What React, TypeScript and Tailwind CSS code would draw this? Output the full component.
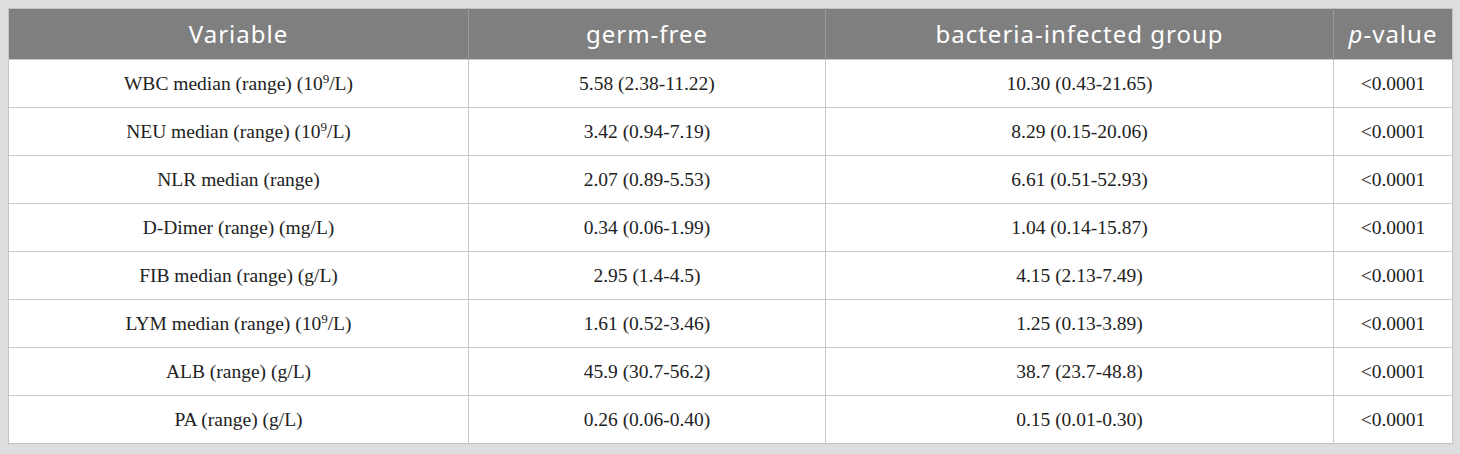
import React from 'react';

const sup = <sup className="relative -top-[7px] text-[13px]">9</sup>;

const rows: [React.ReactNode, string, string, string][] = [
  [<>WBC median (range) (10{sup}/L)</>, '5.58 (2.38-11.22)', '10.30 (0.43-21.65)', '<0.0001'],
  [<>NEU median (range) (10{sup}/L)</>, '3.42 (0.94-7.19)', '8.29 (0.15-20.06)', '<0.0001'],
  ['NLR median (range)', '2.07 (0.89-5.53)', '6.61 (0.51-52.93)', '<0.0001'],
  ['D-Dimer (range) (mg/L)', '0.34 (0.06-1.99)', '1.04 (0.14-15.87)', '<0.0001'],
  ['FIB median (range) (g/L)', '2.95 (1.4-4.5)', '4.15 (2.13-7.49)', '<0.0001'],
  [<>LYM median (range) (10{sup}/L)</>, '1.61 (0.52-3.46)', '1.25 (0.13-3.89)', '<0.0001'],
  ['ALB (range) (g/L)', '45.9 (30.7-56.2)', '38.7 (23.7-48.8)', '<0.0001'],
  ['PA (range) (g/L)', '0.26 (0.06-0.40)', '0.15 (0.01-0.30)', '<0.0001'],
];

export default function App() {
  return (
    <div className="h-[454px] w-[1460px] bg-[#dcdddf] p-2">
      <table className="w-[1444px] table-fixed border-collapse border border-[#c4c4c4] bg-white">
        <colgroup>
          <col className="w-[460px]" />
          <col className="w-[357px]" />
          <col className="w-[508px]" />
          <col className="w-[119px]" />
        </colgroup>
        <thead>
          <tr
            className="h-[51px] bg-[#7f7f7f] text-[24px] tracking-[1px] text-white"
            style={{ fontFamily: '"Noto Sans", "Open Sans", sans-serif' }}
          >
            <th className="font-normal">Variable</th>
            <th className="border-l border-[#9a9a9a] font-normal">germ-free</th>
            <th className="border-l border-[#9a9a9a] font-normal">bacteria-infected group</th>
            <th className="border-l border-[#9a9a9a] font-normal">
              <i>p</i>-value
            </th>
          </tr>
        </thead>
        <tbody className="text-[19.5px] text-[#222]" style={{ fontFamily: '"Liberation Serif", serif' }}>
          {rows.map((r, i) => (
            <tr key={i} className="h-[48px] border-t border-[#c8c8c8]">
              <td className="text-center">{r[0]}</td>
              <td className="border-l border-[#c8c8c8] text-center">{r[1]}</td>
              <td className="border-l border-[#c8c8c8] text-center">{r[2]}</td>
              <td className="border-l border-[#c8c8c8] text-center">{r[3]}</td>
            </tr>
          ))}
        </tbody>
      </table>
    </div>
  );
}
